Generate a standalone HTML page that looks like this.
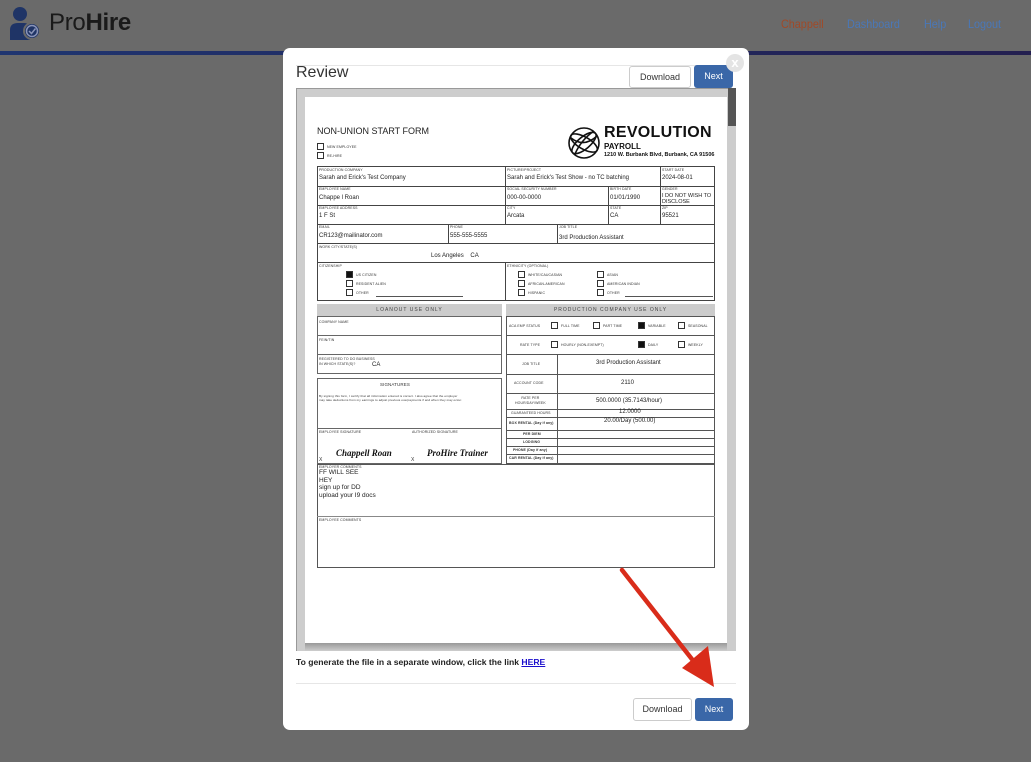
<!DOCTYPE html>
<html><head><meta charset="utf-8"><style>
*{box-sizing:border-box;margin:0;padding:0}
body{width:1031px;height:762px;background:#6a6a6a;position:relative;overflow:hidden;font-family:"Liberation Sans",sans-serif}
.a{position:absolute}
.b{position:absolute;border:1px solid #444}
.l{position:absolute;font-size:3.5px;color:#333;white-space:nowrap;letter-spacing:.1px}
.v{position:absolute;font-size:6px;color:#222;white-space:nowrap}
.cb{position:absolute;width:7px;height:7px;border:1px solid #333;background:#fff}
.cb.f{background:#111}
.gh{position:absolute;background:#ccc;font-size:5px;color:#444;text-align:center;letter-spacing:1px;line-height:12px}
.btn{position:absolute;font-size:10px;border-radius:3px;text-align:center}
</style></head><body>
<svg class="a" style="left:8px;top:6px" width="36" height="34" viewBox="0 0 36 34"><circle cx="12" cy="8" r="7" fill="#1f3466"/><path d="M2 34 V24 Q2 17 10 17 H16 Q22 17 22 22 V34Z" fill="#1f3466"/><circle cx="24" cy="25" r="8" fill="#1f3466" stroke="#6a6a6a" stroke-width="2"/><circle cx="24" cy="25" r="5.5" fill="none" stroke="#8a94b8" stroke-width="1.5"/><path d="M21 25 l2.5 2.5 l4-5" fill="none" stroke="#8a94b8" stroke-width="1.5"/></svg>
<div class="a" style="left:49px;top:9px;font-size:24px;color:#1a1a1a;letter-spacing:-.3px">Pro<b>Hire</b></div>
<div class="a" style="left:781px;top:17px;font-size:12px;color:#a04a28;transform:scaleX(.9);transform-origin:left">Chappell</div>
<div class="a" style="left:847px;top:17px;font-size:12px;color:#4a78b8;transform:scaleX(.9);transform-origin:left">Dashboard</div>
<div class="a" style="left:924px;top:17px;font-size:12px;color:#4a78b8;transform:scaleX(.9);transform-origin:left">Help</div>
<div class="a" style="left:968px;top:17px;font-size:12px;color:#4a78b8;transform:scaleX(.9);transform-origin:left">Logout</div>
<div class="a" style="left:0;top:51px;width:1031px;height:4px;background:linear-gradient(90deg,#1f3570,#231f50)"></div>
<div class="a" style="left:283px;top:48px;width:466px;height:682px;background:#fff;border-radius:7px"></div>
<div class="a" style="left:296px;top:65px;width:440px;height:1px;background:#e6e6e6"></div>
<div class="a" style="left:296px;top:64px;font-size:16px;color:#333">Review</div>
<div class="btn" style="left:629px;top:66px;width:62px;height:22px;border:1px solid #ccc;line-height:20px;color:#333;font-size:9px">Download</div>
<div class="btn" style="left:694px;top:65px;width:39px;height:23px;background:#3a67a8;color:#fff;line-height:23px;font-size:9px">Next</div>
<div class="a" style="left:726px;top:54px;width:18px;height:18px;border-radius:50%;background:#e4e4e4;color:#fff;font-size:13px;font-weight:bold;text-align:center;line-height:18px">x</div>
<div class="a" style="left:296px;top:88px;width:440px;height:563px;background:#cdcdcd;border-left:1px solid #999;border-top:1px solid #999"></div>
<div class="a" style="left:728px;top:88px;width:8px;height:38px;background:#555"></div>
<div class="a" style="left:305px;top:97px;width:422px;height:546px;background:#fff"></div>
<div class="a" style="left:305px;top:643px;width:422px;height:8px;background:linear-gradient(#999,#cdcdcd)"></div>
<div class="a" style="left:317px;top:126px;font-size:9px;color:#222">NON-UNION START FORM</div>
<div class="cb" style="left:317px;top:143px"></div><div class="l" style="left:327px;top:145px">NEW EMPLOYEE</div>
<div class="cb" style="left:317px;top:152px"></div><div class="l" style="left:327px;top:154px">RE-HIRE</div>
<svg class="a" style="left:567px;top:126px" width="34" height="34" viewBox="0 0 34 34" fill="none" stroke="#111" stroke-width="1.6"><circle cx="17" cy="17" r="15"/><ellipse cx="17" cy="17" rx="15" ry="6" transform="rotate(30 17 17)"/><ellipse cx="17" cy="17" rx="15" ry="6" transform="rotate(-40 17 17)"/><path d="M4 12 Q17 22 30 10 M8 28 Q14 14 27 5"/></svg>
<div class="a" style="left:604px;top:124px;font-size:16px;font-weight:900;color:#111;letter-spacing:.3px">REVOLUTION</div>
<div class="a" style="left:604px;top:142px;font-size:8px;font-weight:bold;color:#111">PAYROLL</div>
<div class="a" style="left:604px;top:152px;font-size:5.5px;font-weight:bold;color:#111">1210 W. Burbank Blvd, Burbank, CA 91506</div>
<div class="b" style="left:317px;top:166px;width:398px;height:135px"></div>
<div class="a" style="left:317px;top:186px;width:398px;height:1px;background:#444"></div>
<div class="a" style="left:317px;top:205px;width:398px;height:1px;background:#444"></div>
<div class="a" style="left:317px;top:224px;width:398px;height:1px;background:#444"></div>
<div class="a" style="left:317px;top:243px;width:398px;height:1px;background:#444"></div>
<div class="a" style="left:317px;top:262px;width:398px;height:1px;background:#444"></div>
<div class="a" style="left:505px;top:166px;width:1px;height:58px;background:#444"></div>
<div class="a" style="left:660px;top:166px;width:1px;height:58px;background:#444"></div>
<div class="a" style="left:608px;top:186px;width:1px;height:38px;background:#444"></div>
<div class="a" style="left:448px;top:224px;width:1px;height:19px;background:#444"></div>
<div class="a" style="left:557px;top:224px;width:1px;height:19px;background:#444"></div>
<div class="a" style="left:505px;top:262px;width:1px;height:38px;background:#444"></div>
<div class="l" style="left:319px;top:168px">PRODUCTION COMPANY</div><div class="v" style="left:319px;top:175px">Sarah and Erick's Test Company</div>
<div class="l" style="left:507px;top:168px">PICTURE/PROJECT</div><div class="v" style="left:507px;top:175px">Sarah and Erick's Test Show - no TC batching</div>
<div class="l" style="left:662px;top:168px">START DATE</div><div class="v" style="left:662px;top:175px">2024-08-01</div>
<div class="l" style="left:319px;top:187px">EMPLOYEE NAME</div><div class="v" style="left:319px;top:195px">Chappe l Roan</div>
<div class="l" style="left:507px;top:187px">SOCIAL SECURITY NUMBER</div><div class="v" style="left:507px;top:195px">000-00-0000</div>
<div class="l" style="left:610px;top:187px">BIRTH DATE</div><div class="v" style="left:610px;top:195px">01/01/1990</div>
<div class="l" style="left:662px;top:187px">GENDER</div><div class="v" style="left:662px;top:193px;font-size:5.5px;line-height:6px">I DO NOT WISH TO<br>DISCLOSE</div>
<div class="l" style="left:319px;top:206px">EMPLOYEE ADDRESS</div><div class="v" style="left:319px;top:213px">1 F St</div>
<div class="l" style="left:507px;top:206px">CITY</div><div class="v" style="left:507px;top:213px">Arcata</div>
<div class="l" style="left:610px;top:206px">STATE</div><div class="v" style="left:610px;top:213px">CA</div>
<div class="l" style="left:662px;top:206px">ZIP</div><div class="v" style="left:662px;top:213px">95521</div>
<div class="l" style="left:319px;top:225px">EMAIL</div><div class="v" style="left:319px;top:233px">CR123@mailinator.com</div>
<div class="l" style="left:450px;top:225px">PHONE</div><div class="v" style="left:450px;top:233px">555-555-5555</div>
<div class="l" style="left:559px;top:225px">JOB TITLE</div><div class="v" style="left:559px;top:235px">3rd Production Assistant</div>
<div class="l" style="left:319px;top:245px">WORK CITY/STATE(S)</div><div class="v" style="left:431px;top:253px">Los Angeles &nbsp;&nbsp; CA</div>
<div class="l" style="left:319px;top:264px">CITIZENSHIP</div>
<div class="cb f" style="left:346px;top:271px"></div><div class="l" style="left:356px;top:273px">US CITIZEN</div>
<div class="cb" style="left:346px;top:280px"></div><div class="l" style="left:356px;top:282px">RESIDENT ALIEN</div>
<div class="cb" style="left:346px;top:289px"></div><div class="l" style="left:356px;top:291px">OTHER</div><div class="a" style="left:376px;top:296px;width:87px;height:1px;background:#555"></div>
<div class="l" style="left:507px;top:264px">ETHNICITY (OPTIONAL)</div>
<div class="cb" style="left:518px;top:271px"></div><div class="l" style="left:528px;top:273px">WHITE/CAUCASIAN</div>
<div class="cb" style="left:518px;top:280px"></div><div class="l" style="left:528px;top:282px">AFRICAN-AMERICAN</div>
<div class="cb" style="left:518px;top:289px"></div><div class="l" style="left:528px;top:291px">HISPANIC</div>
<div class="cb" style="left:597px;top:271px"></div><div class="l" style="left:607px;top:273px">ASIAN</div>
<div class="cb" style="left:597px;top:280px"></div><div class="l" style="left:607px;top:282px">AMERICAN INDIAN</div>
<div class="cb" style="left:597px;top:289px"></div><div class="l" style="left:607px;top:291px">OTHER</div><div class="a" style="left:625px;top:296px;width:88px;height:1px;background:#555"></div>
<div class="gh" style="left:317px;top:304px;width:185px;height:12px">LOANOUT USE ONLY</div>
<div class="b" style="left:317px;top:316px;width:185px;height:58px;border-color:#666"></div>
<div class="a" style="left:317px;top:335px;width:185px;height:1px;background:#666"></div>
<div class="a" style="left:317px;top:354px;width:185px;height:1px;background:#666"></div>
<div class="l" style="left:319px;top:320px">COMPANY NAME</div>
<div class="l" style="left:319px;top:338px">FEIN/TIN</div>
<div class="l" style="left:319px;top:357px;line-height:5px">REGISTERED TO DO BUSINESS<br>IN WHICH STATE(S)?</div><div class="v" style="left:372px;top:362px">CA</div>
<div class="b" style="left:317px;top:378px;width:185px;height:86px;border-color:#666"></div>
<div class="a" style="left:317px;top:428px;width:185px;height:1px;background:#666"></div>
<div class="l" style="left:380px;top:382px;font-size:4.5px">SIGNATURES</div>
<div class="l" style="left:319px;top:394px;font-size:3px;line-height:4px">By signing this form, I certify that all information entered is correct. I also agree that the employer<br>may take deductions from my earnings to adjust previous overpayments if and when they may occur.</div>
<div class="l" style="left:319px;top:430px">EMPLOYEE SIGNATURE</div><div class="l" style="left:412px;top:430px">AUTHORIZED SIGNATURE</div>
<div class="a" style="left:336px;top:448px;font-family:'Liberation Serif',serif;font-style:italic;font-weight:bold;font-size:9px;color:#111">Chappell Roan</div>
<div class="a" style="left:427px;top:448px;font-family:'Liberation Serif',serif;font-style:italic;font-weight:bold;font-size:9px;color:#111">ProHire Trainer</div>
<div class="l" style="left:319px;top:457px;font-size:5px">X</div><div class="l" style="left:411px;top:457px;font-size:5px">X</div>
<div class="gh" style="left:506px;top:304px;width:209px;height:12px">PRODUCTION COMPANY USE ONLY</div>
<div class="b" style="left:506px;top:316px;width:209px;height:148px;border-color:#555"></div>
<div class="a" style="left:506px;top:335px;width:209px;height:1px;background:#555"></div>
<div class="a" style="left:506px;top:354px;width:209px;height:1px;background:#555"></div>
<div class="a" style="left:506px;top:374px;width:209px;height:1px;background:#555"></div>
<div class="a" style="left:506px;top:393px;width:209px;height:1px;background:#555"></div>
<div class="a" style="left:506px;top:409px;width:209px;height:1px;background:#555"></div>
<div class="a" style="left:506px;top:417px;width:209px;height:1px;background:#555"></div>
<div class="a" style="left:506px;top:430px;width:209px;height:1px;background:#555"></div>
<div class="a" style="left:506px;top:438px;width:209px;height:1px;background:#555"></div>
<div class="a" style="left:506px;top:446px;width:209px;height:1px;background:#555"></div>
<div class="a" style="left:506px;top:454px;width:209px;height:1px;background:#555"></div>
<div class="a" style="left:557px;top:354px;width:1px;height:110px;background:#555"></div>
<div class="l" style="left:509px;top:324px">ACA EMP STATUS</div>
<div class="cb" style="left:551px;top:322px"></div><div class="l" style="left:561px;top:324px">FULL TIME</div>
<div class="cb" style="left:593px;top:322px"></div><div class="l" style="left:603px;top:324px">PART TIME</div>
<div class="cb f" style="left:638px;top:322px"></div><div class="l" style="left:648px;top:324px">VARIABLE</div>
<div class="cb" style="left:678px;top:322px"></div><div class="l" style="left:688px;top:324px">SEASONAL</div>
<div class="l" style="left:520px;top:343px">RATE TYPE</div>
<div class="cb" style="left:551px;top:341px"></div><div class="l" style="left:561px;top:343px">HOURLY (NON-EXEMPT)</div>
<div class="cb f" style="left:638px;top:341px"></div><div class="l" style="left:648px;top:343px">DAILY</div>
<div class="cb" style="left:678px;top:341px"></div><div class="l" style="left:688px;top:343px">WEEKLY</div>
<div class="l" style="left:522px;top:362px">JOB TITLE</div><div class="v" style="left:596px;top:360px">3rd Production Assistant</div>
<div class="l" style="left:514px;top:381px">ACCOUNT CODE</div><div class="v" style="left:621px;top:380px">2110</div>
<div class="l" style="left:515px;top:396px;line-height:5px;text-align:center">RATE PER<br>HOUR/DAY/WEEK</div><div class="v" style="left:596px;top:398px">500.0000 (35.7143/hour)</div>
<div class="l" style="left:511px;top:411px">GUARANTEED HOURS</div><div class="v" style="left:619px;top:409px">12.0000</div>
<div class="l" style="left:509px;top:421px;font-weight:bold">BOX RENTAL (Day if any)</div><div class="v" style="left:604px;top:418px">20.00/Day (500.00)</div>
<div class="l" style="left:523px;top:432px;font-weight:bold">PER DIEM</div>
<div class="l" style="left:523px;top:440px;font-weight:bold">LODGING</div>
<div class="l" style="left:513px;top:448px;font-weight:bold">PHONE (Day if any)</div>
<div class="l" style="left:509px;top:456px;font-weight:bold">CAR RENTAL (Day if any)</div>
<div class="b" style="left:317px;top:464px;width:398px;height:104px;border-color:#555"></div>
<div class="a" style="left:317px;top:516px;width:398px;height:1px;background:#888"></div>
<div class="l" style="left:319px;top:465px">EMPLOYER COMMENTS</div>
<div class="v" style="left:319px;top:469px;line-height:7.5px;font-size:6.5px">FF WILL SEE<br>HEY<br>sign up for DD<br>upload your I9 docs</div>
<div class="l" style="left:319px;top:518px">EMPLOYEE COMMENTS</div>
<div class="a" style="left:296px;top:657px;font-size:8.6px;font-weight:bold;color:#222">To generate the file in a separate window, click the link <span style="color:#1a0dcc;text-decoration:underline">HERE</span></div>
<div class="a" style="left:296px;top:683px;width:440px;height:1px;background:#e6e6e6"></div>
<div class="btn" style="left:633px;top:698px;width:59px;height:23px;border:1px solid #ccc;line-height:21px;color:#333;font-size:9px">Download</div>
<div class="btn" style="left:695px;top:698px;width:38px;height:23px;background:#3a67a8;color:#fff;line-height:23px;font-size:9px">Next</div>
<svg class="a" style="left:610px;top:560px" width="110" height="135" viewBox="0 0 110 135"><line x1="12" y1="10" x2="92" y2="112" stroke="#d92c1a" stroke-width="4.5" stroke-linecap="round"/><polygon points="104,127 72,108 98,86" fill="#d92c1a"/></svg>
</body></html>
